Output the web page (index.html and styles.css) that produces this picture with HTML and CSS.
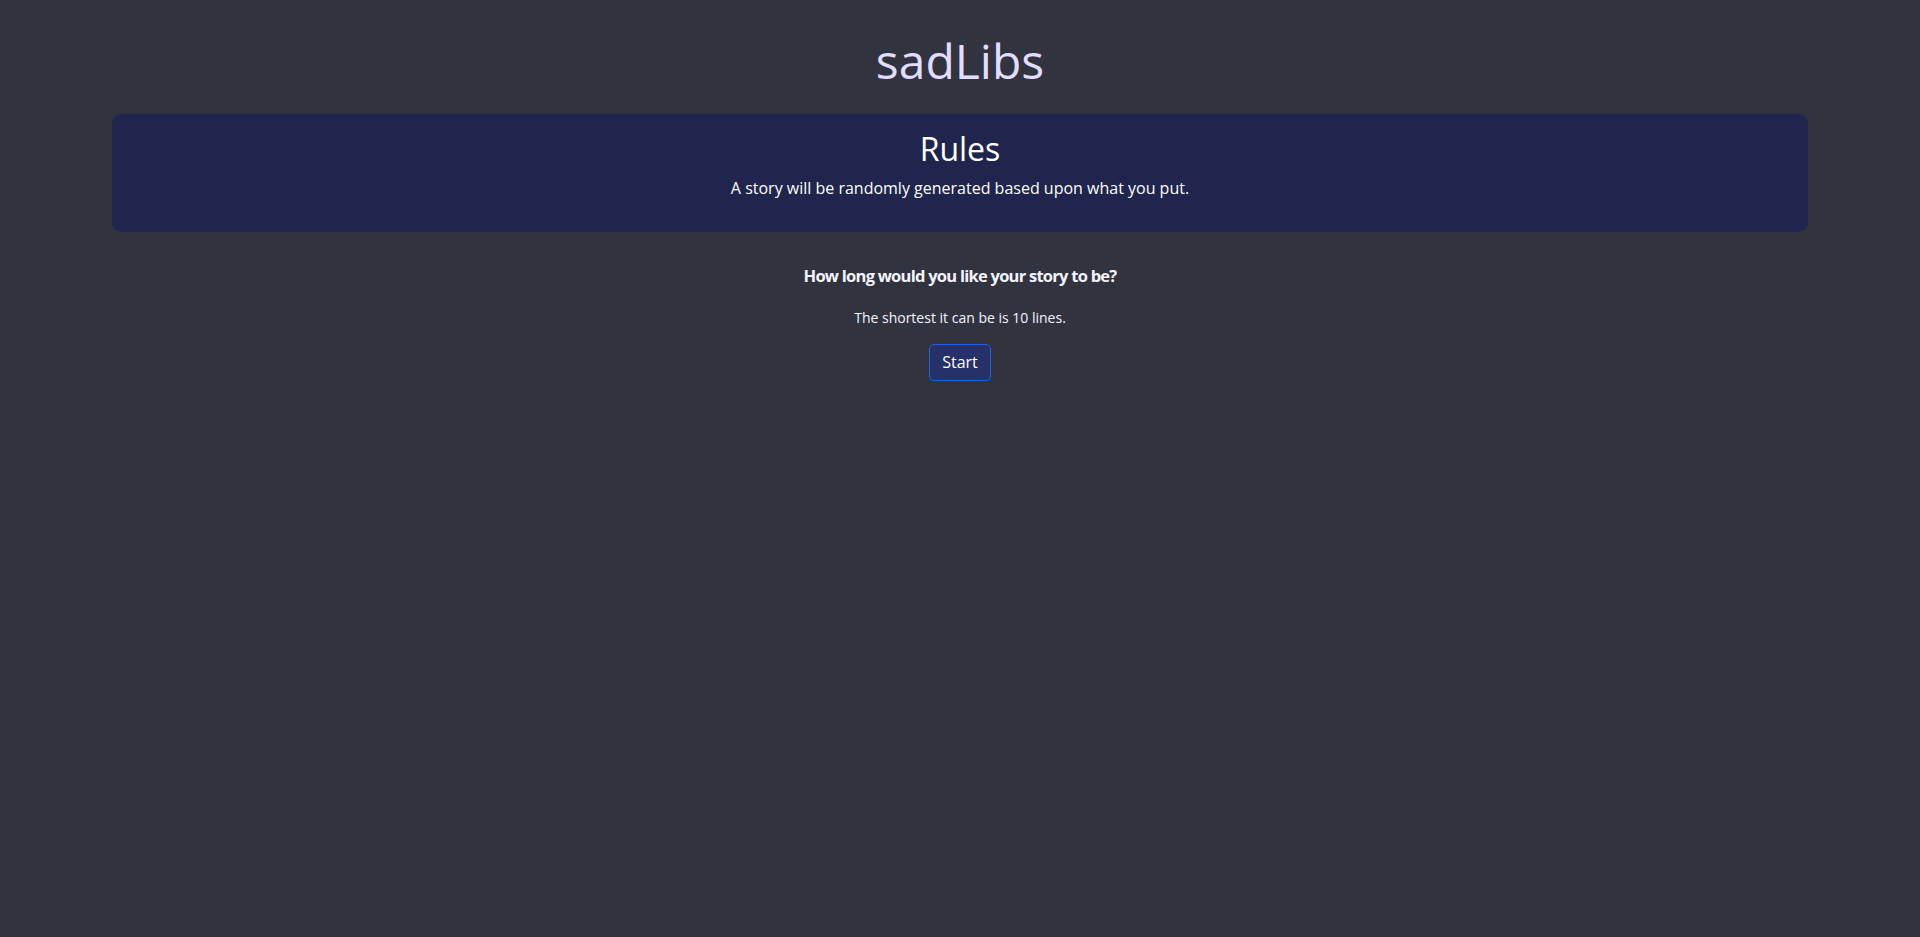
FILE: index.html
```html
<!DOCTYPE html>
<html lang="en">
<head>
<meta charset="utf-8">
<title>sadLibs</title>
<link rel="stylesheet" href="styles.css">
</head>
<body>
<main class="page">
  <h1 class="title">sadLibs</h1>
  <section class="rules">
    <h2 class="rules-title">Rules</h2>
    <p class="rules-text">A story will be randomly generated based upon what you put.</p>
  </section>
  <section class="setup">
    <p class="question">How long would you like your story to be?</p>
    <p class="hint">The shortest it can be is 10 lines.</p>
    <button class="start-btn" type="button">Start</button>
  </section>
</main>
</body>
</html>
```

FILE: styles.css
```css
* { box-sizing: border-box; }
html, body { margin: 0; padding: 0; }
body {
  background: #31343f;
  color: #f4f4ff;
  font-family: "Open Sans", "Noto Sans", sans-serif;
  font-size: 16px;
  line-height: 1.5;
  min-height: 937px;
}
.page {
  padding: 0 112px;
  display: flex;
  flex-direction: column;
  align-items: stretch;
  text-align: center;
}
.title {
  margin: 32px 0 24px;
  font-size: 48px;
  line-height: 1.2;
  font-weight: 400;
  color: #e2dcff;
}
.rules {
  background: #1f254c;
  border-radius: 9px;
  padding: 16px 16px 16px;
}
.rules-title {
  margin: 0 0 8px;
  font-size: 32px;
  line-height: 1.2;
  font-weight: 400;
  color: #ffffff;
}
.rules-text {
  margin: 0 0 16px;
  color: #ffffff;
}
.setup {
  padding-top: 31px;
  display: flex;
  flex-direction: column;
  align-items: center;
}
.question {
  margin: 0 0 19px;
  font-weight: 700;
  font-size: 16.5px;
  line-height: 25.5px;
  letter-spacing: -0.75px;
}
.hint {
  margin: 0 0 16px;
  font-size: 14px;
  line-height: 21px;
}
.start-btn {
  font-family: inherit;
  font-size: 16px;
  line-height: 23px;
  color: #ffffff;
  background: #263069;
  border: 1px solid #1d63e0;
  border-radius: 5px;
  padding: 6px 12px;
  cursor: pointer;
}
```
